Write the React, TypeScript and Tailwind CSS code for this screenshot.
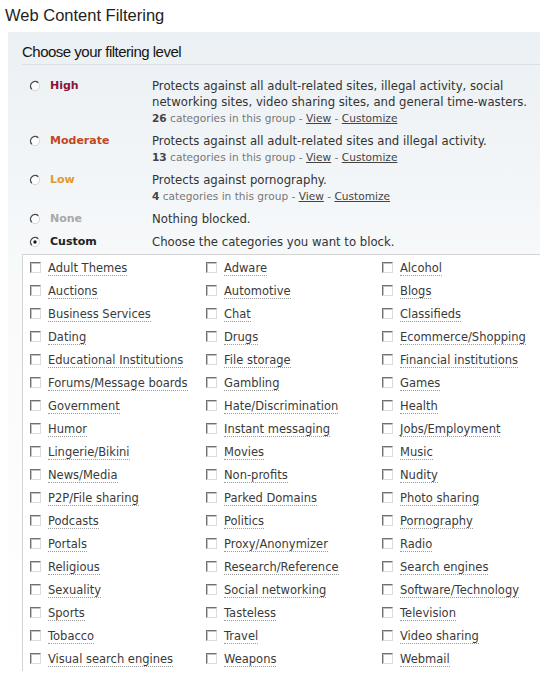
const levels = [
  {
    name: "High",
    color: "text-[#8a1538]",
    lines: [
      "Protects against all adult-related sites, illegal activity, social",
      "networking sites, video sharing sites, and general time-wasters.",
    ],
    count: 26,
  },
  {
    name: "Moderate",
    color: "text-[#c2471f]",
    lines: ["Protects against all adult-related sites and illegal activity."],
    count: 13,
  },
  {
    name: "Low",
    color: "text-[#e09a2c]",
    lines: ["Protects against pornography."],
    count: 4,
  },
  { name: "None", color: "text-[#a8a8a8]", lines: ["Nothing blocked."] },
  {
    name: "Custom",
    color: "text-[#222]",
    lines: ["Choose the categories you want to block."],
    checked: true,
  },
];

const categories = [
  "Adult Themes", "Adware", "Alcohol",
  "Auctions", "Automotive", "Blogs",
  "Business Services", "Chat", "Classifieds",
  "Dating", "Drugs", "Ecommerce/Shopping",
  "Educational Institutions", "File storage", "Financial institutions",
  "Forums/Message boards", "Gambling", "Games",
  "Government", "Hate/Discrimination", "Health",
  "Humor", "Instant messaging", "Jobs/Employment",
  "Lingerie/Bikini", "Movies", "Music",
  "News/Media", "Non-profits", "Nudity",
  "P2P/File sharing", "Parked Domains", "Photo sharing",
  "Podcasts", "Politics", "Pornography",
  "Portals", "Proxy/Anonymizer", "Radio",
  "Religious", "Research/Reference", "Search engines",
  "Sexuality", "Social networking", "Software/Technology",
  "Sports", "Tasteless", "Television",
  "Tobacco", "Travel", "Video sharing",
  "Visual search engines", "Weapons", "Webmail",
];

function Radio({ checked }: { checked?: boolean }) {
  return (
    <svg width="12" height="12" viewBox="0 0 12 12" className="shrink-0">
      <circle cx="6" cy="6" r="4.6" fill="#fff" stroke="#d6d6d6" strokeWidth="1" />
      <path d="M9.25 2.75 A4.6 4.6 0 0 0 2.75 9.25" fill="none" stroke="#4a4a4a" strokeWidth="1.4" />
      {checked && <circle cx="6" cy="6" r="1.7" fill="#1a1a1a" />}
    </svg>
  );
}

function Checkbox() {
  return (
    <span className="w-[11px] h-[11px] shrink-0 bg-white border border-t-[#6f6f6f] border-l-[#6f6f6f] border-r-[#dcdcdc] border-b-[#dcdcdc] shadow-[inset_1px_1px_0_#c4c4c4]" />
  );
}

export default function App() {
  return (
    <div className="w-[540px] h-[674px] overflow-hidden bg-white font-['DejaVu_Sans',Verdana,sans-serif] text-[#333]">
      <h1 className="pl-[5px] pt-[5px] h-[32px] font-['Liberation_Sans',Arial,sans-serif] text-[16.5px] leading-[20px] text-[#1e1e1e]">
        Web Content Filtering
      </h1>

      <div className="ml-2 pl-[14px] bg-gradient-to-b from-[#ebf0f4] via-[#f8fafb] via-40% to-white">
        <div className="pt-[11px] h-[33px] border-b border-[#d9dfe4] font-['Liberation_Sans',Arial,sans-serif] text-[15px] leading-[18px] tracking-[-0.5px] text-[#151515]">
          Choose your filtering level
        </div>

        <div className="pt-[13px] pb-[4px] flex flex-col gap-[7px]">
          {levels.map((l) => (
            <div key={l.name} className="grid grid-cols-[123px_1fr] pl-[7px] text-[11.7px] leading-[16px]">
              <div className="flex items-center h-[16px] gap-[9px]">
                <Radio checked={l.checked} />
                <span className={`font-bold text-[11px] ${l.color}`}>{l.name}</span>
              </div>
              <div>
                {l.lines.map((t) => (
                  <div key={t}>{t}</div>
                ))}
                {l.count !== undefined && (
                  <div className="text-[10.6px] text-[#777]">
                    <span className="font-bold text-[#444]">{l.count}</span> categories in this group -{" "}
                    <span className="underline text-[#444]">View</span> -{" "}
                    <span className="underline text-[#444]">Customize</span>
                  </div>
                )}
              </div>
            </div>
          ))}
        </div>

        <div className="border-t border-l border-[#d4d4d4] pl-[7px] pt-[2px] grid grid-cols-[176px_176px_1fr] bg-white">
          {categories.map((c) => (
            <div key={c} className="h-[23px] flex items-center gap-[7px]">
              <span className="-mt-[3px] flex">
                <Checkbox />
              </span>
              <span className="text-[11.5px] leading-[14px] text-[#3a3a3a] border-b border-dotted border-[#9a9a9a] whitespace-nowrap">
                {c}
              </span>
            </div>
          ))}
        </div>
      </div>
    </div>
  );
}
